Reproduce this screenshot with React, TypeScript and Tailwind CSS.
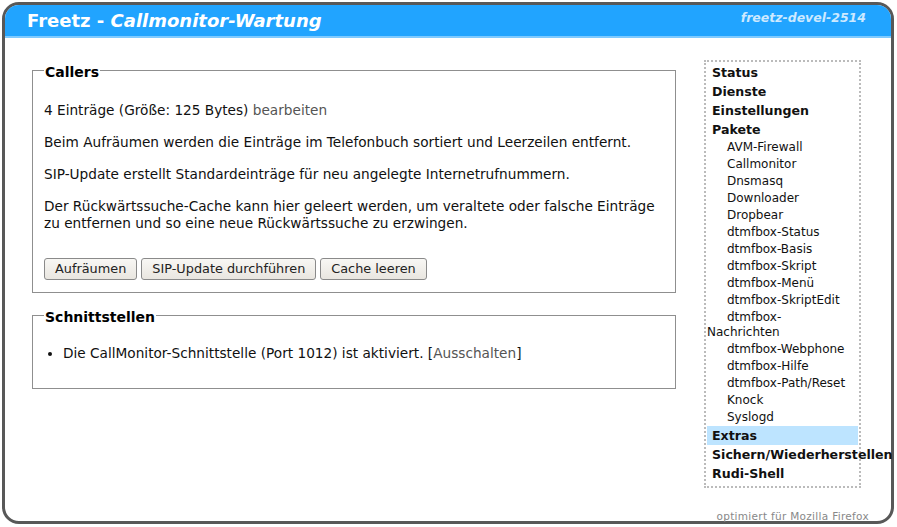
import React from "react"

const menu: { label: React.ReactNode; key: string; sub?: boolean; active?: boolean }[] = [
  { key: "status", label: "Status" },
  { key: "dienste", label: "Dienste" },
  { key: "einst", label: "Einstellungen" },
  { key: "pakete", label: "Pakete" },
  { key: "avm", label: "AVM-Firewall", sub: true },
  { key: "cm", label: "Callmonitor", sub: true },
  { key: "dns", label: "Dnsmasq", sub: true },
  { key: "dl", label: "Downloader", sub: true },
  { key: "db", label: "Dropbear", sub: true },
  { key: "d1", label: "dtmfbox-Status", sub: true },
  { key: "d2", label: "dtmfbox-Basis", sub: true },
  { key: "d3", label: "dtmfbox-Skript", sub: true },
  { key: "d4", label: "dtmfbox-Menü", sub: true },
  { key: "d5", label: "dtmfbox-SkriptEdit", sub: true },
  { key: "d6", label: <>dtmfbox-<br />Nachrichten</>, sub: true },
  { key: "d7", label: "dtmfbox-Webphone", sub: true },
  { key: "d8", label: "dtmfbox-Hilfe", sub: true },
  { key: "d9", label: "dtmfbox-Path/Reset", sub: true },
  { key: "knock", label: "Knock", sub: true },
  { key: "sys", label: "Syslogd", sub: true },
  { key: "extras", label: "Extras", active: true },
  { key: "sichern", label: "Sichern/Wiederherstellen" },
  { key: "rudi", label: "Rudi-Shell" },
]

const Button = ({ children }: { children: React.ReactNode }) => (
  <button className="h-[22px] px-[10px] rounded-[3px] border border-[#8a8a8a] bg-gradient-to-b from-[#f8f7f4] to-[#e9e6e0] text-[12.85px] text-[#222] leading-none">
    {children}
  </button>
)

const Box = ({ title, children, className = "" }: { title: string; children: React.ReactNode; className?: string }) => (
  <fieldset className={`border border-[#8f8f8f] px-[11px] ${className}`}>
    <legend className="px-[1px] pt-[4px] ml-0 text-[14px] font-bold text-black">{title}</legend>
    {children}
  </fieldset>
)

export default function App() {
  return (
    <div className="w-[897px] h-[527px] bg-white p-[2px] font-['DejaVu_Sans',sans-serif] text-[#111]">
      <div className="h-[522px] w-[892px] border-[3px] border-[#585858] rounded-[17px] flex flex-col">
        <div className="h-[33px] bg-[#21a4ff] rounded-t-[14px] border-b-2 border-[#7fcaff] flex items-center justify-between pl-[22px] pr-[25px] shrink-0">
          <div className="text-white font-bold text-[18px] leading-none">
            Freetz - <i>Callmonitor-Wartung</i>
          </div>
          <div className="text-[#cde9ff] font-bold italic text-[12.5px] leading-none -mt-[4px]">freetz-devel-2514</div>
        </div>
        <div className="flex flex-1 relative">
          <div className="w-[673px] pl-[27px] pt-[20px] shrink-0">
            <div className="w-[644px]">
              <Box title="Callers" className="pb-[12px]">
                <div className="text-[13.67px] leading-[17px] pt-[19px]">
                  <p>
                    4 Einträge (Größe: 125 Bytes) <span className="text-[#555]">bearbeiten</span>
                  </p>
                  <p className="mt-[15px]">Beim Aufräumen werden die Einträge im Telefonbuch sortiert und Leerzeilen entfernt.</p>
                  <p className="mt-[15px]">SIP-Update erstellt Standardeinträge für neu angelegte Internetrufnummern.</p>
                  <p className="mt-[15px]">
                    Der Rückwärtssuche-Cache kann hier geleert werden, um veraltete oder falsche Einträge zu entfernen und so eine neue Rückwärtssuche zu erzwingen.
                  </p>
                  <div className="flex gap-[4px] mt-[26px]">
                    <Button>Aufräumen</Button>
                    <Button>SIP-Update durchführen</Button>
                    <Button>Cache leeren</Button>
                  </div>
                </div>
              </Box>
              <Box title="Schnittstellen" className="mt-[10px] pb-[26px]">
                <ul className="text-[13.67px] leading-[17px] pt-[17px] pl-[19px] list-disc">
                  <li>
                    Die CallMonitor-Schnittstelle (Port 1012) ist aktiviert. [<span className="text-[#555]">Ausschalten</span>]
                  </li>
                </ul>
              </Box>
            </div>
          </div>
          <div className="pl-[26px] pt-[22px]">
            <div className="w-[157px] border-2 border-dotted border-[#bbb] px-[1px] pt-[1px] pb-[3px]">
              {menu.map((m) => (
                <div
                  key={m.key}
                  className={
                    m.sub
                      ? "text-[12px] leading-[15px] py-[1px] indent-[20px] text-[#111]"
                      : `text-[12.6px] leading-[19px] font-bold pl-[5px] whitespace-nowrap ${m.active ? "bg-[#bde4ff]" : ""}`
                  }
                >
                  {m.label}
                </div>
              ))}
            </div>
          </div>
          <div className="absolute right-[22px] bottom-[-4px] text-[10.5px] text-[#888] tracking-[0.3px]">optimiert für Mozilla Firefox</div>
        </div>
      </div>
    </div>
  )
}
